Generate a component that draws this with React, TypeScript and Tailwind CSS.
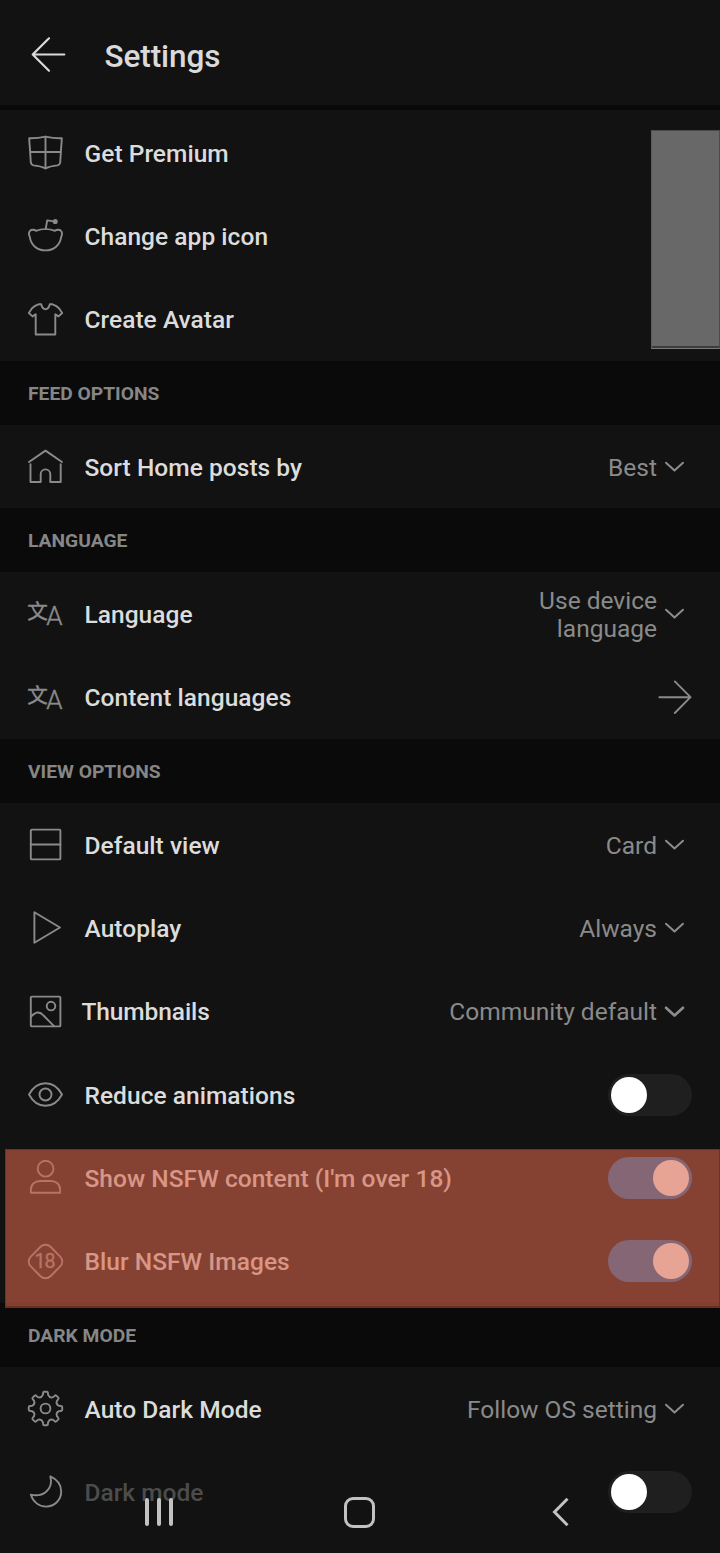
import type { ReactNode } from 'react';
import clsx from 'clsx';

const Icon = ({ children, className }: { children: ReactNode; className?: string }) => (
  <svg
    viewBox="0 0 35 35"
    fill="none"
    stroke="currentColor"
    strokeWidth={1.9}
    strokeLinecap="round"
    strokeLinejoin="round"
    className={clsx('w-[35px] h-[35px] shrink-0 overflow-visible', className)}
  >
    {children}
  </svg>
);

// Eight flat teeth around the centre of a 35x35 box
const gearPath = () => {
  const point = (deg: number, r: number) => {
    const a = (deg * Math.PI) / 180;
    return `${(17.5 + r * Math.cos(a)).toFixed(2)} ${(17.5 + r * Math.sin(a)).toFixed(2)}`;
  };
  let d = '';
  for (let i = 0; i < 8; i++) {
    const c = i * 45;
    d += `${i === 0 ? 'M' : 'L'}${point(c - 9, 15.6)}`;
    d += `Q${point(c - 8.5, 16.8)} ${point(c - 5, 16.8)}`;
    d += `L${point(c + 5, 16.8)}`;
    d += `Q${point(c + 8.5, 16.8)} ${point(c + 9, 15.6)}`;
    d += `L${point(c + 11, 13.8)}`;
    d += `Q${point(c + 22.5, 11)} ${point(c + 34, 13.8)}`;
  }
  return d + 'Z';
};

const PremiumIcon = () => (
  <Icon>
    <path d="M1.2 3.2C7 3.4 12 2.8 17.5 1.6C23 2.8 28 3.4 33.8 3.2C33.6 9 33 13 32.8 18L32.2 27.5Q31.8 29.8 29.5 30.4Q22 31.2 17.5 33.4Q13 31.2 5.5 30.4Q3.2 29.8 2.8 27.5L2.2 18C2 13 1.4 9 1.2 3.2Z" />
    <path d="M17.5 1.6V33.4M2.4 17H32.6" />
  </Icon>
);

const AppIcon = () => (
  <Icon>
    <path d="M8 12.8C6.5 11.6 3.5 11.3 2 12.8C0.5 14.4 0.7 16.4 1.8 18.8C3 27 9 32.4 17.5 32.4C26 32.4 32 27 33.2 18.8C34.3 16.4 34.5 14.4 33 12.8C31.5 11.3 28.5 11.6 27 12.8C21.5 10.6 13.5 10.6 8 12.8Z" />
    <path d="M17.7 11L19.2 2.4L26 3.4" />
    <circle cx="27.2" cy="3.5" r="1.6" fill="currentColor" />
  </Icon>
);

const AvatarIcon = () => (
  <Icon>
    <path d="M10.5 2.3H13.2C14 6 16 7.2 17.5 7.2C19 7.2 21 6 21.8 2.3H24.5Q29 3.8 31 6.3L34.2 11L30.5 14.4L27.3 12.2V32.5H7.7V12.2L4.5 14.4L0.8 11L4 6.3Q6 3.8 10.5 2.3Z" />
  </Icon>
);

const HomeIcon = () => (
  <Icon>
    <path d="M1 13L17.5 1.6L34 13" />
    <path d="M2.5 15.2V33H12.7V25.2a4.8 4.8 0 0 1 9.6 0V33H32.7V15.2" />
  </Icon>
);

const TranslateIcon = () => (
  <Icon>
    <g fill="currentColor" strokeWidth={0.45}>
      <text x="-0.8" y="23" fontSize="20.5" className="font-['Noto_Sans_CJK_SC',sans-serif]">文</text>
      <text x="18.2" y="29.4" fontSize="26" className="font-['Roboto',sans-serif] font-light">A</text>
    </g>
  </Icon>
);

const CardIcon = () => (
  <Icon>
    <rect x="2.8" y="2.6" width="29.6" height="29.8" rx="1" />
    <path d="M2.8 17.5H32.4" />
  </Icon>
);

const PlayIcon = () => (
  <Icon>
    <path d="M6.4 2.3V32.8L32 17.5Z" />
  </Icon>
);

const ThumbnailIcon = () => (
  <Icon>
    <rect x="2.8" y="2.6" width="29.6" height="29.8" rx="1" />
    <circle cx="23" cy="12.1" r="4.3" />
    <path d="M2.8 23C7.5 17.2 12 17.2 15.5 21.5L26 32.2" />
  </Icon>
);

const EyeIcon = () => (
  <Icon>
    <path d="M1 17.5C5 10 11 6.2 17.5 6.2S30 10 34 17.5C30 25 24 28.8 17.5 28.8S5 25 1 17.5Z" />
    <circle cx="17.5" cy="17.5" r="6" />
  </Icon>
);

const UserIcon = () => (
  <Icon>
    <circle cx="17.6" cy="8.7" r="7.9" />
    <path d="M2.9 32.7V29.5C2.9 24.2 7 21 12 21H23C28 21 32.1 24.2 32.1 29.5V32.7Z" />
  </Icon>
);

const AdultIcon = () => (
  <Icon>
    <rect x="3.6" y="3.6" width="27.8" height="27.8" rx="7" transform="rotate(45 17.5 17.5)" />
    <text
      x="16.6"
      y="24.4"
      fontSize="19.5"
      textAnchor="middle"
      letterSpacing="-0.8"
      fill="currentColor"
      strokeWidth={0.4}
      className="font-['Roboto',sans-serif]"
    >
      18
    </text>
  </Icon>
);

const GearIcon = () => (
  <Icon>
    <path d={gearPath()} />
    <circle cx="17.5" cy="17.5" r="4.9" />
  </Icon>
);

const MoonIcon = () => (
  <Icon>
    <path d="M22.3 2.3C28.5 5 33.2 10 33.2 17.5C33.2 26 26.5 32.6 18 32.6C11 32.6 5 28 2.8 20.6C14 23.5 26 16 22.3 2.3Z" />
  </Icon>
);

const Chevron = ({ bold }: { bold?: boolean }) => (
  <Icon className="text-[#8c8c8c]">
    <path d="M9 13.8L17.5 21.6L26 13.8" strokeWidth={bold ? 2.7 : 2} />
  </Icon>
);

const Toggle = ({ on }: { on?: boolean }) => (
  <div
    className={clsx(
      'flex h-[42px] w-[84px] items-center rounded-full px-[3px]',
      on ? 'justify-end bg-[#1269b4]' : 'bg-[#1f1f1f]'
    )}
  >
    <div className="size-9 rounded-full bg-white" />
  </div>
);

interface RowProps {
  icon: ReactNode;
  label: string;
  value?: string;
  boldChevron?: boolean;
  labelClass?: string;
  children?: ReactNode;
}

const Row = ({ icon, label, value, boldChevron, labelClass, children }: RowProps) => (
  <div className="flex h-[83.35px] items-center px-7 text-[24.5px] text-[#8a8a8a]">
    {icon}
    <span
      className={clsx(
        'ml-[21.5px] flex-1 whitespace-nowrap pt-[3px] font-medium',
        labelClass ?? 'tracking-[0.04px] text-[#dcdcdc]'
      )}
    >
      {label}
    </span>
    {value && (
      <>
        <span className="whitespace-pre-line pt-[3px] text-right leading-[28.7px]">{value}</span>
        <Chevron bold={boldChevron} />
      </>
    )}
    {children}
  </div>
);

const SectionTitle = ({ children }: { children: ReactNode }) => (
  <h2 className="flex h-16 items-center bg-[#0a0a0a] px-7 pt-[3px] text-[19.25px] font-bold text-[#868686]">
    {children}
  </h2>
);

const App = () => {
  return (
    <div className="relative h-[1553px] w-[720px] overflow-hidden bg-[#121212] font-['Roboto',sans-serif]">
      <header className="flex h-[110px] items-center border-b-[5px] border-[#090909] pl-[31px] pt-1 text-[#dadada]">
        <Icon>
          <path d="M1.7 17.5H33.3M18 1.3L1.7 17.5L18 33.7" strokeWidth={2.2} />
        </Icon>
        <h1 className="ml-[38.5px] pt-1 text-[31.5px] font-medium tracking-[-0.1px]">Settings</h1>
      </header>

      <main className="pt-[0.8px]">
        <Row icon={<PremiumIcon />} label="Get Premium" />
        <Row icon={<AppIcon />} label="Change app icon" />
        <Row icon={<AvatarIcon />} label="Create Avatar" />

        <SectionTitle>FEED OPTIONS</SectionTitle>
        <Row icon={<HomeIcon />} label="Sort Home posts by" value="Best" />

        <SectionTitle>LANGUAGE</SectionTitle>
        <Row icon={<TranslateIcon />} label="Language" value={'Use device\nlanguage'} />
        <Row icon={<TranslateIcon />} label="Content languages">
          <Icon>
            <path d="M2.3 17.2H33.5M17.8 1.4L33.5 17.2L17.8 33" />
          </Icon>
        </Row>

        <SectionTitle>VIEW OPTIONS</SectionTitle>
        <Row icon={<CardIcon />} label="Default view" value="Card" />
        <Row icon={<PlayIcon />} label="Autoplay" value="Always" />
        <Row
          icon={<ThumbnailIcon />}
          label="Thumbnails"
          value="Community default"
          boldChevron
          labelClass="-indent-[3px] tracking-[-0.1px] text-[#dcdcdc]"
        />
        <Row icon={<EyeIcon />} label="Reduce animations">
          <Toggle />
        </Row>
        <Row icon={<UserIcon />} label="Show NSFW content (I'm over 18)">
          <Toggle on />
        </Row>
        <Row icon={<AdultIcon />} label="Blur NSFW Images">
          <Toggle on />
        </Row>

        <SectionTitle>DARK MODE</SectionTitle>
        <Row icon={<GearIcon />} label="Auto Dark Mode" value="Follow OS setting" />
        <Row icon={<MoonIcon />} label="Dark mode" labelClass="text-[#4c4c4c]">
          <Toggle />
        </Row>
      </main>

      <div className="absolute right-0 top-[130px] h-[219px] w-[69px] border border-b-[#7a7a7a] border-l-[#5c5c5c] border-r-[#4a4a4a] border-t-[#4a4a4a] bg-[#3c3c3c] pb-[2px]">
        <div className="h-full bg-[#686868]" />
      </div>

      {/* highlight over the two NSFW switches */}
      <div className="absolute left-[4.5px] right-0 top-[1149px] h-[158.5px] border border-b-2 border-[#963f26]/70 bg-[rgb(215,100,73)]/59 bg-clip-padding" />

      <nav className="absolute bottom-[25px] left-0 right-0 flex h-8 items-center justify-center pr-px text-[#c2c2c2]">
        <div className="flex w-[201px] justify-center gap-[8px]">
          <div className="h-7 w-[4px] rounded-sm bg-current" />
          <div className="h-7 w-[4px] rounded-sm bg-current" />
          <div className="h-7 w-[4px] rounded-sm bg-current" />
        </div>
        <div className="flex w-[201px] justify-center">
          <div className="size-[31px] rounded-[9px] border-[3px] border-current" />
        </div>
        <div className="flex w-[201px] justify-center">
          <svg viewBox="0 0 17 30" fill="none" stroke="currentColor" strokeWidth={3} className="h-[30px] w-[17px]">
            <path d="M15.5 1.8L2.5 15L15.5 28.2" />
          </svg>
        </div>
      </nav>
    </div>
  );
};

export default App;
